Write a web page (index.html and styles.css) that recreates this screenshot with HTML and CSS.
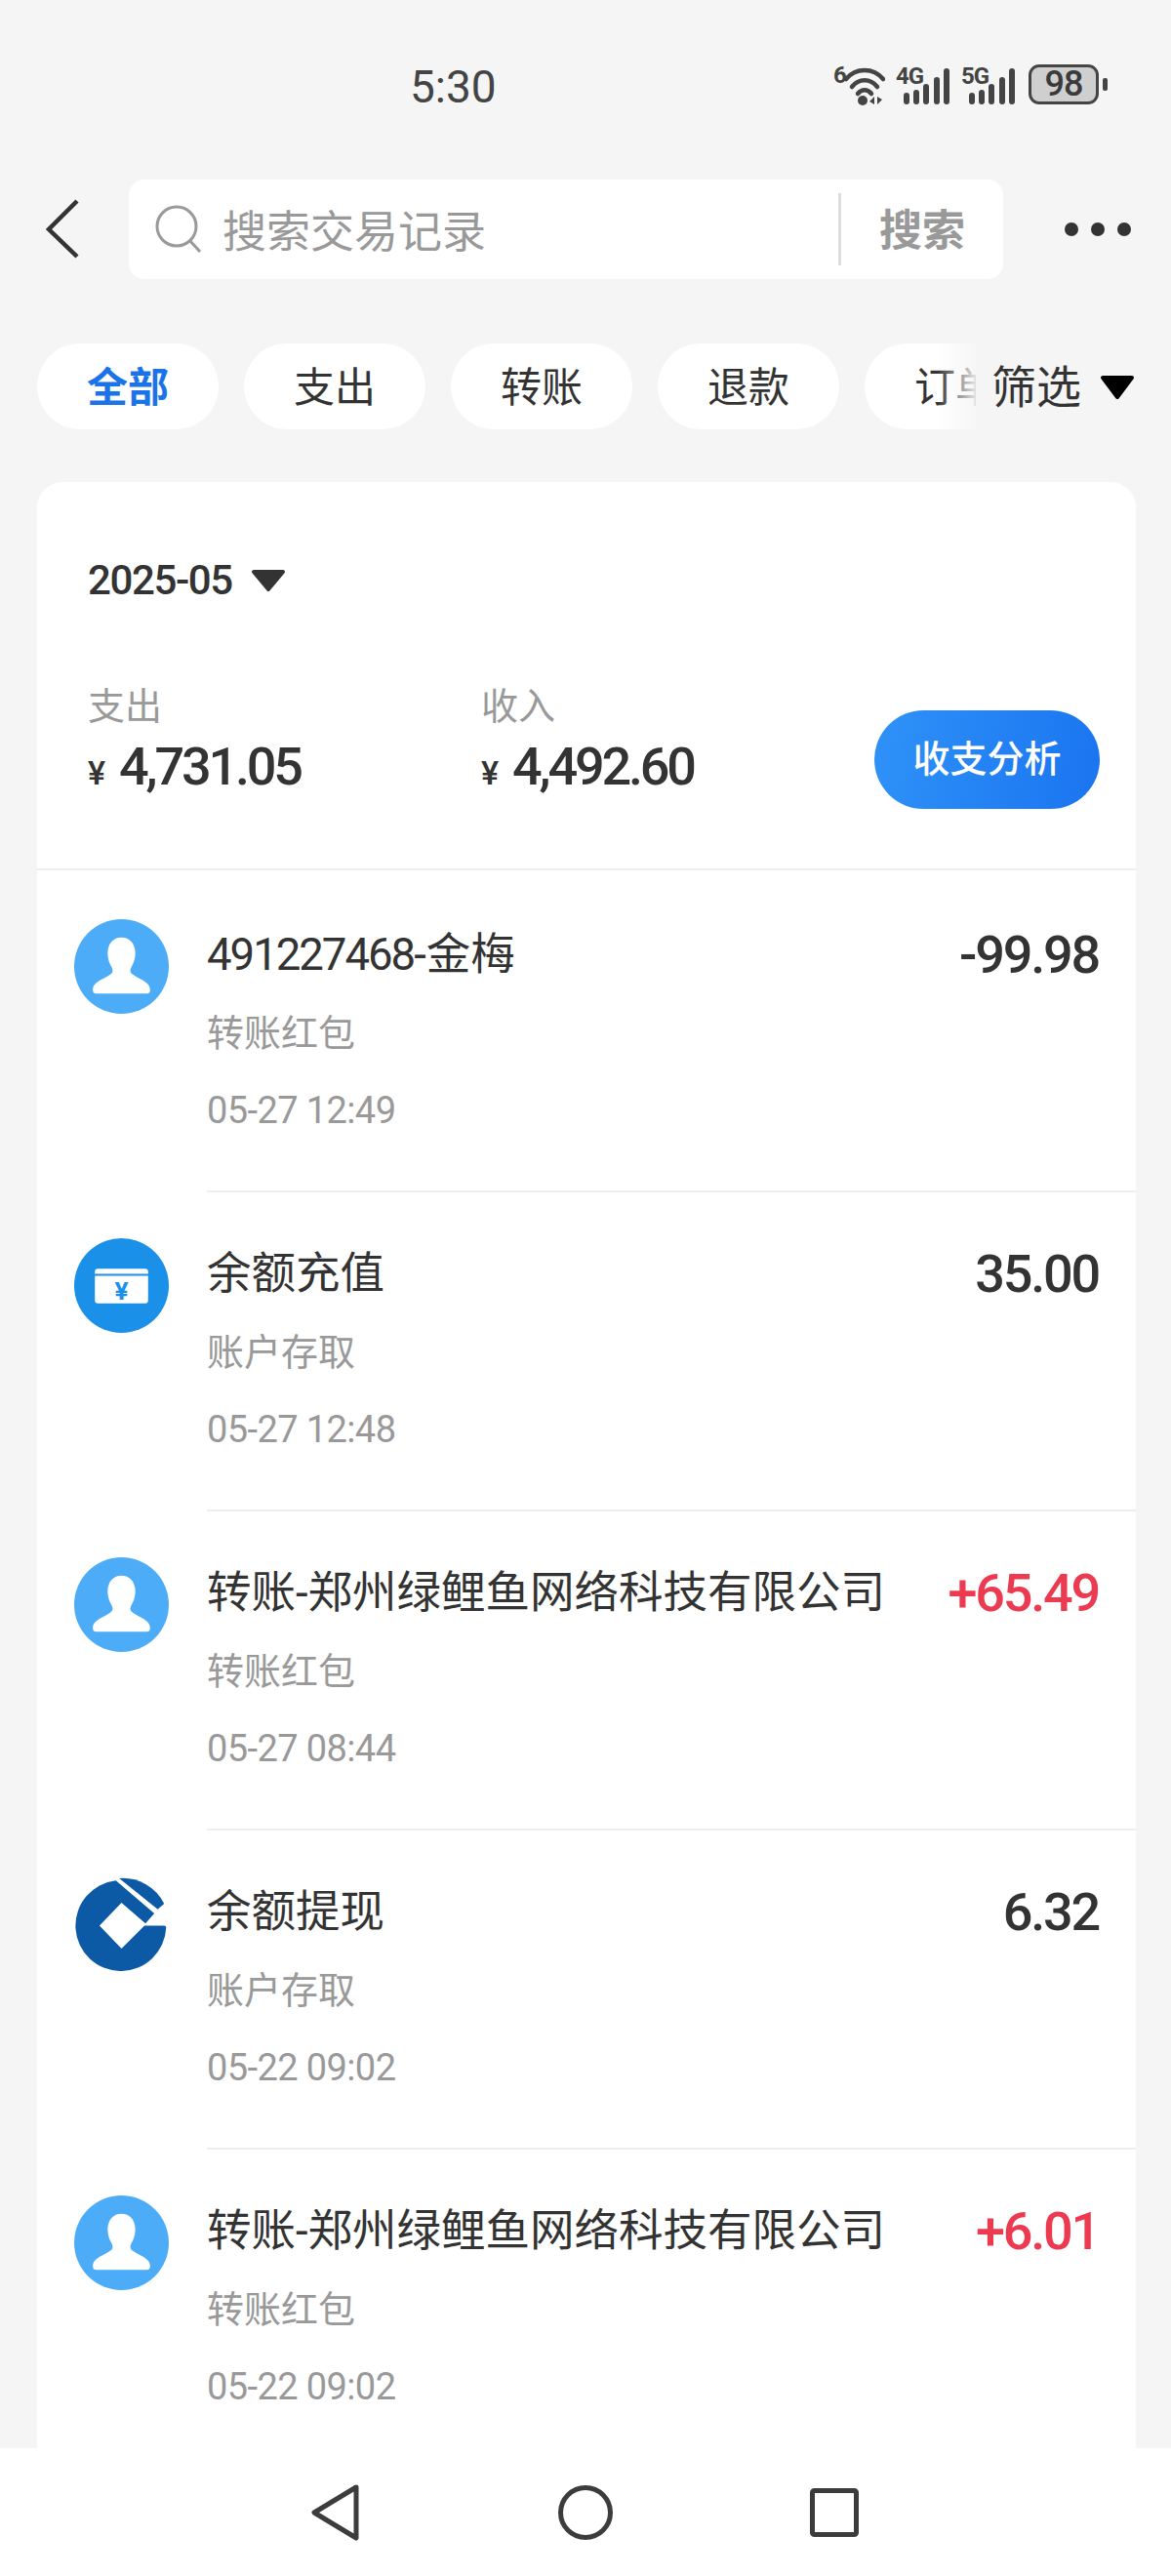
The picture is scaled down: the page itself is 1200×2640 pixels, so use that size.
FILE: index.html
```html
<!DOCTYPE html>
<html lang="zh-CN">
<head>
  <meta charset="UTF-8">
  <title>交易记录</title>
  <link rel="stylesheet" href="styles.css">
</head>
<body>
  <svg class="defs" width="0" height="0">
    <symbol id="person" viewBox="0 0 96 96">
      <circle cx="48" cy="48" r="48" fill="#4dacf7"/>
      <path d="M48 18.5c-8 0-14 6-14 16 0 6 2 11 4 14 2 4 1 6-2 8-5 4-17 7-17 15 0 3 1 4 4 4h50c3 0 4-1 4-4 0-8-12-11-17-15-3-2-4-4-2-8 2-3 4-8 4-14 0-10-6-16-14-16z" fill="#fff"/>
    </symbol>
    <symbol id="bars" viewBox="0 0 56 44">
      <g fill="#444">
        <rect x="8" y="29" width="6" height="12" rx="3"/><rect x="18" y="26" width="6" height="15" rx="3"/>
        <rect x="28" y="20" width="6" height="21" rx="3"/><rect x="39" y="13" width="6" height="28" rx="3"/>
        <rect x="49" y="4" width="6" height="37" rx="3"/>
      </g>
    </symbol>
  </svg>

  <div class="phone">
    <div class="statusbar">
      <span class="clock">5:30</span>
      <div class="status-icons">
        <svg width="54" height="52" viewBox="0 -8 54 52">
          <text x="1" y="19" class="sb-label">6</text>
          <path d="M14 15C24 3 42 3 52 15" fill="none" stroke="#444" stroke-width="4.500" stroke-linecap="round"/>
          <path d="M20 23C27 14 39 14 46 23" fill="none" stroke="#444" stroke-width="4.500" stroke-linecap="round"/>
          <path d="M26 30C30 25 36 25 40 30" fill="none" stroke="#444" stroke-width="4.500" stroke-linecap="round"/>
          <circle cx="31" cy="37" r="5" fill="#444"/>
          <path d="M43 33v8l-5-3zM46 33v8l5-5z" fill="#444"/>
        </svg>
        <svg width="56" height="52" viewBox="0 -8 56 52">
          <use href="#bars" width="56" height="44"/>
          <text x="0" y="20" class="sb-label">4G</text>
        </svg>
        <svg width="56" height="52" viewBox="0 -8 56 52">
          <use href="#bars" width="56" height="44"/>
          <text x="0" y="20" class="sb-label">5G</text>
        </svg>
        <div class="battery"><span class="batt-num">98</span><i class="batt-tip"></i></div>
      </div>
    </div>

    <div class="topbar">
      <svg class="back" width="40" height="64" viewBox="0 0 40 64">
        <path d="M35 4L6 33l29 28" fill="none" stroke="#333" stroke-width="4.500"/>
      </svg>
      <div class="search">
        <svg width="50" height="50" viewBox="0 0 50 50">
          <circle cx="22" cy="22" r="20" fill="none" stroke="#999" stroke-width="3"/>
          <path d="M35 36l11 12" stroke="#999" stroke-width="3"/>
        </svg>
        <span class="search-hint">搜索交易记录</span>
        <span class="search-btn">搜索</span>
      </div>
      <div class="more"><i></i><i></i><i></i></div>
    </div>

    <div class="tabs">
      <div class="tab-list">
        <span class="tab active">全部</span>
        <span class="tab">支出</span>
        <span class="tab">转账</span>
        <span class="tab">退款</span>
        <span class="tab">订单</span>
      </div>
      <div class="filter">筛选
        <svg class="tri-black" width="36" height="26" viewBox="0 0 36 26"><path d="M3 3h30L18 23z" fill="#000" stroke="#000" stroke-width="4" stroke-linejoin="round"/></svg>
      </div>
    </div>

    <div class="card">
      <div class="summary">
        <div class="month">2025-05
          <svg class="tri-dark" width="36" height="24" viewBox="0 0 36 24"><path d="M3 3h30L18 21z" fill="#333" stroke="#333" stroke-width="4" stroke-linejoin="round"/></svg>
        </div>
        <div class="totals">
          <div class="total">
            <div class="total-label">支出</div>
            <div class="total-val"><small>¥</small>4,731.05</div>
          </div>
          <div class="total">
            <div class="total-label">收入</div>
            <div class="total-val"><small>¥</small>4,492.60</div>
          </div>
          <span class="analysis">收支分析</span>
        </div>
      </div>

      <div class="row">
        <svg class="avatar" viewBox="0 0 96 96"><use href="#person"/></svg>
        <div class="row-body">
          <div class="row-top"><span class="name"><span class="digits">491227468</span>-金梅</span><span class="amount">-99.98</span></div>
          <div class="kind">转账红包</div>
          <div class="time">05-27 12:49</div>
        </div>
      </div>

      <div class="row">
        <svg class="avatar" viewBox="0 0 96 96">
          <circle cx="48" cy="48" r="48" fill="#1a90e8"/>
          <path d="M21 36v-2a3 3 0 0 1 3-3h48a3 3 0 0 1 3 3v2z" fill="#fff"/>
          <path d="M21 38h54v25a3 3 0 0 1-3 3H24a3 3 0 0 1-3-3z" fill="#fff"/>
          <text x="48" y="62" class="yen-mark">¥</text>
        </svg>
        <div class="row-body">
          <div class="row-top"><span class="name">余额充值</span><span class="amount">35.00</span></div>
          <div class="kind">账户存取</div>
          <div class="time">05-27 12:48</div>
        </div>
      </div>

      <div class="row">
        <svg class="avatar" viewBox="0 0 96 96"><use href="#person"/></svg>
        <div class="row-body">
          <div class="row-top"><span class="name">转账-郑州绿鲤鱼网络科技有限公司</span><span class="amount plus">+65.49</span></div>
          <div class="kind">转账红包</div>
          <div class="time">05-27 08:44</div>
        </div>
      </div>

      <div class="row">
        <svg class="avatar" viewBox="0 0 96 96">
          <path d="M42.300 4.300A46 46 0 1 0 93.300 52a2 2 0 0 0-2-2H71.300L48 73.300 25.700 50 48 26.700 72.300 47.700 81.300 37.700z" fill="#0c5aa5"/>
          <path d="M45.700 2A47 47 0 0 1 91.300 27.700L84.700 33.300z" fill="#0c5aa5"/>
        </svg>
        <div class="row-body">
          <div class="row-top"><span class="name">余额提现</span><span class="amount">6.32</span></div>
          <div class="kind">账户存取</div>
          <div class="time">05-22 09:02</div>
        </div>
      </div>

      <div class="row">
        <svg class="avatar" viewBox="0 0 96 96"><use href="#person"/></svg>
        <div class="row-body">
          <div class="row-top"><span class="name">转账-郑州绿鲤鱼网络科技有限公司</span><span class="amount plus">+6.01</span></div>
          <div class="kind">转账红包</div>
          <div class="time">05-22 09:02</div>
        </div>
      </div>
    </div>

    <div class="navbar">
      <svg width="52" height="60" viewBox="0 0 52 60">
        <path d="M47 4L4 30l43 26z" fill="none" stroke="#3c3c3c" stroke-width="5" stroke-linejoin="round"/>
      </svg>
      <svg width="56" height="56" viewBox="0 0 56 56">
        <circle cx="28" cy="28" r="25.500" fill="none" stroke="#3c3c3c" stroke-width="5"/>
      </svg>
      <svg width="50" height="50" viewBox="0 0 50 50">
        <rect x="2.500" y="2.500" width="45" height="45" rx="2" fill="none" stroke="#3c3c3c" stroke-width="5"/>
      </svg>
    </div>
  </div>
</body>
</html>
```

FILE: styles.css
```css
* { box-sizing: border-box; }
html, body { margin: 0; padding: 0; }
body { background: #f5f5f5; color: #333; font-family: "Roboto", "Noto Sans CJK SC", sans-serif; }
i { display: block; }
.defs { position: absolute; }

.phone { width: 1200px; height: 2640px; display: flex; flex-direction: column; overflow: hidden; position: relative; }

/* status bar */
.statusbar { height: 184px; flex: none; display: flex; justify-content: space-between; align-items: flex-start; padding: 58px 74px 0 420px; }
.clock { font-size: 46px; line-height: 54px; color: #444; margin-top: 4px; }
.status-icons { display: flex; align-items: flex-start; gap: 11px; }
.sb-label { font-size: 24px; font-weight: 700; fill: #444; letter-spacing: -1px; stroke: #f5f5f5; stroke-width: 1.5px; paint-order: stroke; }
.battery { width: 72px; height: 41px; margin: 8px 0 0 2px; border: 3px solid #444; border-radius: 11px; background: #cfcfcf; position: relative; display: flex; align-items: center; justify-content: center; }
.batt-num { font-size: 36px; line-height: 35px; color: #3a3a3a; font-weight: 500; letter-spacing: -1px; }
.batt-tip { position: absolute; right: -12px; top: 11px; width: 5px; height: 13px; background: #444; border-radius: 2px; }

/* search row */
.topbar { height: 102px; flex: none; display: flex; align-items: center; padding-left: 44px; }
.back { flex: none; margin-right: 48px; margin-top: -2px; }
.search { width: 896px; height: 102px; background: #fff; border-radius: 16px; display: flex; align-items: center; padding-left: 27px; flex: none; }
.search-hint { font-size: 45px; color: #999; margin-left: 19px; padding-bottom: 2px; flex: 1; }
.search-btn { width: 169px; flex: none; height: 74px; line-height: 78px; border-left: 3px solid #ddd; font-size: 44px; font-weight: 700; color: #999; padding-left: 39px; }
.more { display: flex; gap: 13px; margin-left: 63px; }
.more i { width: 14px; height: 14px; border-radius: 50%; background: #333; }

/* tabs */
.tabs { height: 88px; flex: none; margin-top: 66px; position: relative; }
.tab-list { display: flex; gap: 26px; padding-left: 38px; width: 1000px; overflow: hidden; }
.tab { width: 186px; height: 88px; flex: none; border-radius: 44px; background: #fff; font-size: 42px; line-height: 91px; text-align: center; color: #333; }
.tab.active { color: #1a73e8; font-weight: 700; }
.filter { position: absolute; left: 1000px; top: 0; width: 200px; height: 88px; padding: 0 0 6px 16px; background: #f5f5f5; font-size: 46px; color: #333; display: flex; align-items: center; }
.filter::before { content: ""; position: absolute; left: -40px; top: 0; width: 40px; height: 88px; background: linear-gradient(to right, rgba(245,245,245,0), rgba(245,245,245,.9)); }
.tri-black { flex: none; margin: 8px 0 0 19px; }

/* card */
.card { width: 1126px; margin: 54px 0 0 38px; background: #fff; border-radius: 26px 26px 0 0; flex: 1; overflow: hidden; }
.summary { height: 398px; padding: 77px 37px 0 52px; border-bottom: 2px solid #eee; }
.month { font-size: 42px; line-height: 48px; font-weight: 500; color: #333; letter-spacing: -1.4px; display: flex; align-items: center; }
.tri-dark { flex: none; margin-left: 19px; }
.totals { display: flex; align-items: flex-end; margin-top: 82px; }
.total { width: 403px; }
.total-label { font-size: 38px; line-height: 46px; color: #999; }
.total-val { font-size: 54px; line-height: 62px; font-weight: 500; color: #333; letter-spacing: -3.2px; margin-top: 8px; }
.total-val small { font-size: 34px; font-weight: 500; letter-spacing: 0; margin-right: 14px; }
.analysis { margin-left: auto; margin-bottom: -6px; width: 231px; height: 101px; border-radius: 51px; background: linear-gradient(100deg, #2f92f8, #1a74f0); color: #fff; font-size: 38px; font-weight: 500; line-height: 100px; text-align: center; }

/* rows */
.row { height: 327px; display: flex; padding-left: 38px; }
.summary + .row { height: 330px; padding-top: 3px; }
.avatar { width: 97px; height: 97px; flex: none; margin-top: 47px; }
.row-body { flex: 1; margin-left: 39px; padding: 62px 38px 0 0; border-bottom: 2px solid #eee; min-width: 0; }
.row:last-child .row-body { border-bottom: none; }
.row-top { display: flex; justify-content: space-between; align-items: center; height: 44px; }
.name { font-size: 45.500px; line-height: 44px; color: #333; white-space: nowrap; }
.digits { letter-spacing: -2px; }
.amount { font-size: 54px; line-height: 44px; font-weight: 500; color: #333; white-space: nowrap; letter-spacing: -2.2px; }
.amount.plus { color: #ec3a50; }
.kind { font-size: 38px; line-height: 46px; color: #999; margin-top: 35px; }
.time { font-size: 38px; line-height: 44px; color: #999; letter-spacing: -.6px; margin-top: 34px; }
.yen-mark { font-size: 26px; font-weight: 700; fill: #1a90e8; text-anchor: middle; }

/* nav bar */
.navbar { position: absolute; left: 0; bottom: 0; width: 1200px; height: 131px; background: #fff; display: flex; align-items: center; gap: 202px; padding-left: 318px; }
```
